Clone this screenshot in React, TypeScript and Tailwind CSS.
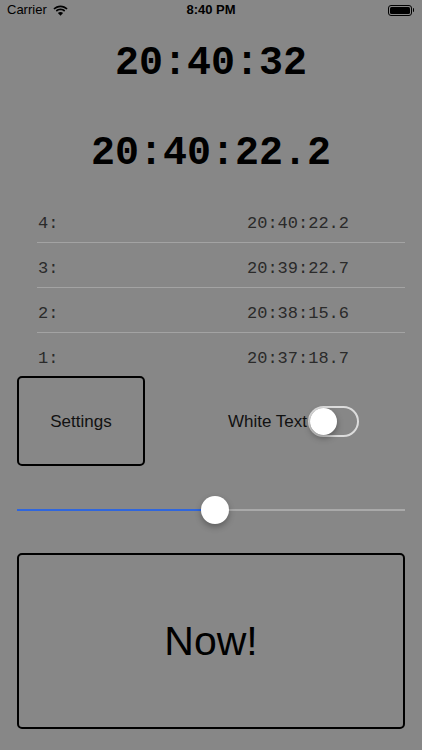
import React, { useState } from 'react';

type Lap = { n: number; time: string };

const laps: Lap[] = [
  { n: 4, time: '20:40:22.2' },
  { n: 3, time: '20:39:22.7' },
  { n: 2, time: '20:38:15.6' },
  { n: 1, time: '20:37:18.7' },
];

function StatusBar(): JSX.Element {
  return (
    <div className="relative flex h-[20px] items-center px-[7px] text-[13px] text-black">
      <span>Carrier</span>
      <svg className="ml-[6px]" width="15" height="11" viewBox="0 0 15 11">
        <path d="M7.5 2.2c2.3 0 4.4.9 6 2.4l1.1-1.2C12.7 1.6 10.2.5 7.5.5S2.3 1.6.4 3.4l1.1 1.2c1.6-1.5 3.7-2.4 6-2.4z" fill="#000" />
        <path d="M7.5 5.3c1.4 0 2.6.5 3.6 1.4l1.1-1.2C11 4.3 9.3 3.6 7.5 3.6S4 4.3 2.8 5.5l1.1 1.2c1-.9 2.2-1.4 3.6-1.4z" fill="#000" />
        <path d="M7.5 10.8 10.1 8c-.7-.6-1.6-1-2.6-1s-1.9.4-2.6 1z" fill="#000" />
      </svg>
      <span className="absolute left-0 right-0 text-center font-semibold">8:40 PM</span>
      <div className="ml-auto mr-[1px] flex items-center">
        <div className="flex h-[11px] w-[24px] items-center rounded-[3px] border border-black p-[1px]">
          <div className="h-full w-full rounded-[1.5px] bg-black" />
        </div>
        <div className="ml-[1px] h-[4px] w-[1.5px] rounded-r-sm bg-black" />
      </div>
    </div>
  );
}

function Toggle(): JSX.Element {
  const [on, setOn] = useState(false);
  return (
    <button
      type="button"
      onClick={() => setOn((prev) => !prev)}
      className="relative ml-[1px] h-[31px] w-[51px] rounded-full border-2 border-[#dcdcdc]"
    >
      <span
        className={
          on
            ? 'absolute right-[0px] top-[0.5px] h-[27px] w-[27px] rounded-full bg-white shadow-[0_3px_6px_rgba(0,0,0,0.35)]'
            : 'absolute left-[0px] top-[0.5px] h-[27px] w-[27px] rounded-full bg-white shadow-[0_3px_6px_rgba(0,0,0,0.35)]'
        }
      />
    </button>
  );
}

function App(): JSX.Element {
  const [value, setValue] = useState(51);
  return (
    <div className="h-[750px] w-[422px] overflow-hidden bg-[#878787] font-['Liberation_Sans',Arial,sans-serif]">
      <StatusBar />
      <div className="mt-[20px] text-center font-['Liberation_Mono','Courier_New',monospace] text-[40px] font-bold leading-[48px] text-black">
        20:40:32
      </div>
      <div className="mt-[42px] text-center font-['Liberation_Mono','Courier_New',monospace] text-[40px] font-bold leading-[48px] text-black">
        20:40:22.2
      </div>

      <div className="ml-[37px] mt-[20px] w-[368px] font-['Liberation_Mono','Courier_New',monospace] text-[17px] text-[#2a2a2a]">
        {laps.map((lap, i) => (
          <div
            key={lap.n}
            className={
              i < laps.length - 1
                ? 'grid h-[45px] grid-cols-[210px_1fr] border-b border-[#a3a3a3] pt-[16px] leading-[20px]'
                : 'grid h-[43px] grid-cols-[210px_1fr] pt-[16px] leading-[20px]'
            }
          >
            <span className="pl-[1px]">{lap.n}:</span>
            <span>{lap.time}</span>
          </div>
        ))}
      </div>

      <div className="flex h-[90px] items-center px-[17px]">
        <button
          type="button"
          className="h-[90px] w-[128px] rounded-[5px] border-2 border-black pt-[2px] text-[17px] text-[#111]"
        >
          Settings
        </button>
        <span className="ml-[83px] pt-[2px] text-[17px] text-[#111]">White Text</span>
        <Toggle />
      </div>

      <div className="relative mx-[17px] flex h-[87px] items-center">
        <div className="h-[2px] bg-[#2f66dd]" style={{ width: `${value}%` }} />
        <div className="h-[2px] flex-1 bg-[#a9a9a9]" />
        <div
          className="absolute top-[29.5px] h-[28px] w-[28px] -translate-x-1/2 rounded-full bg-white shadow-[0_3px_6px_rgba(0,0,0,0.3)]"
          style={{ left: `${value}%` }}
        />
        <input
          type="range"
          min={0}
          max={100}
          value={value}
          onChange={(e) => setValue(Number(e.target.value))}
          className="absolute inset-0 opacity-0"
        />
      </div>

      <button
        type="button"
        className="mx-[17px] h-[176px] w-[388px] rounded-[5px] border-2 border-black pt-[2px] text-[41px] text-black"
      >
        Now!
      </button>
    </div>
  );
}

export default App;
